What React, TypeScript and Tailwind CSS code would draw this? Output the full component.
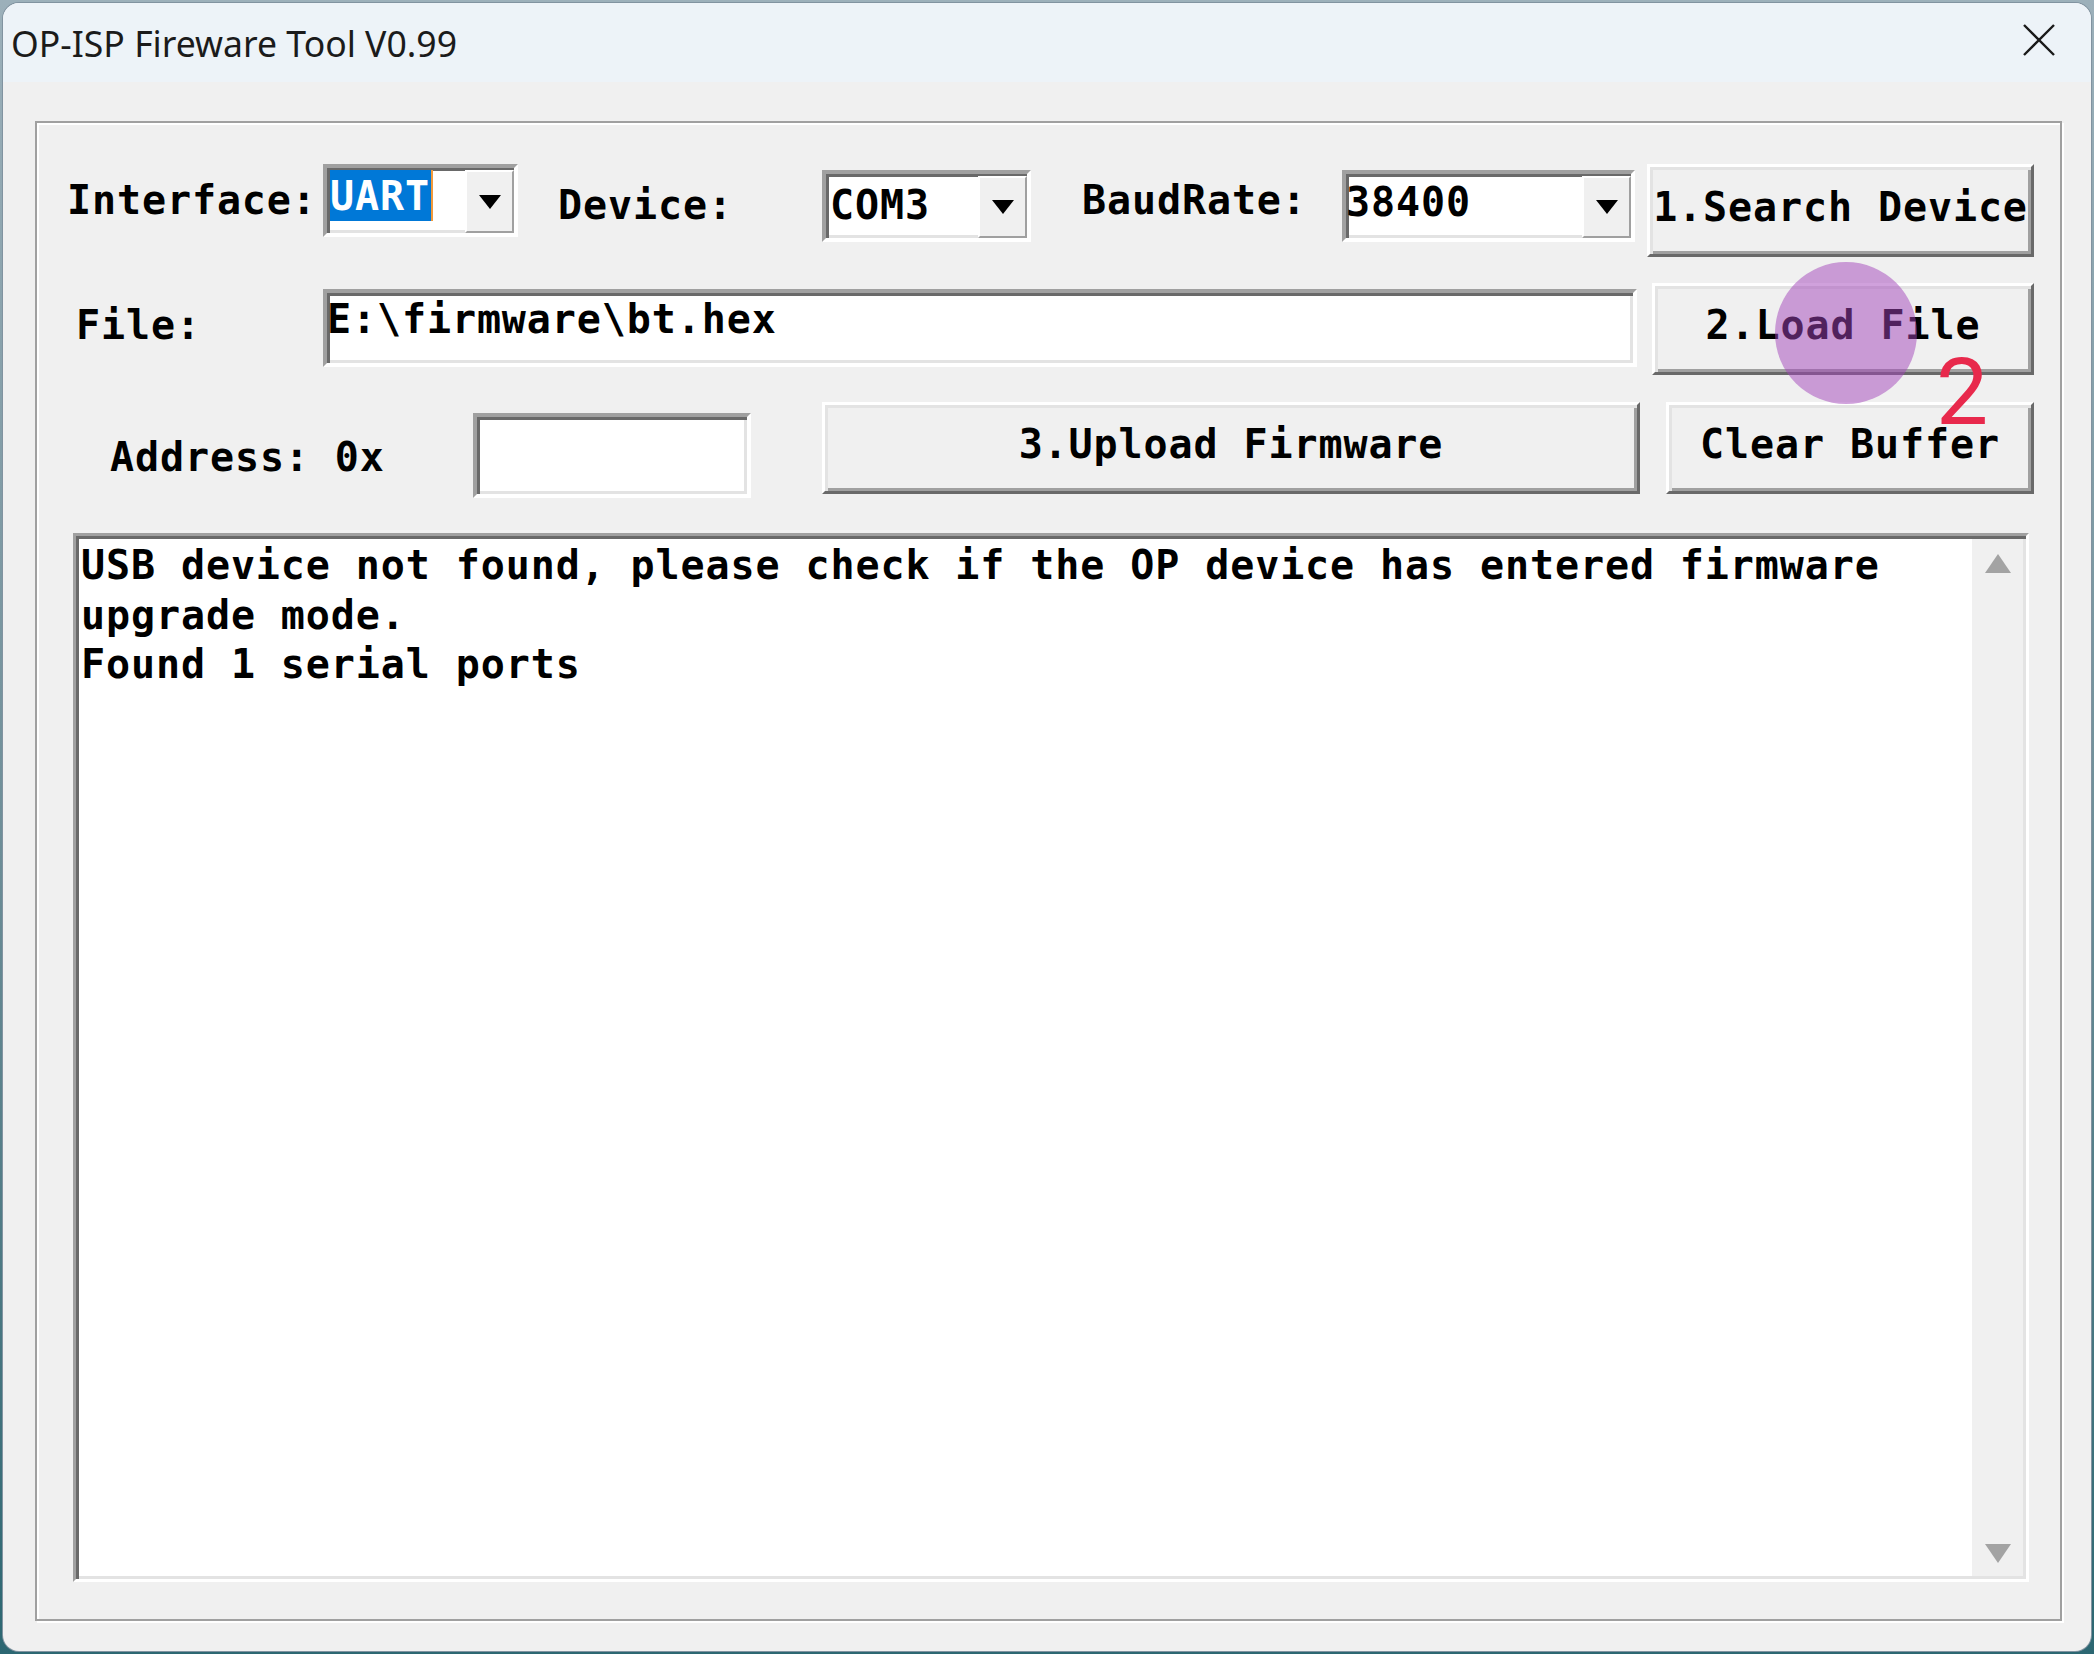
import React from "react";

const mono =
  "font-['DejaVu_Sans_Mono',monospace] font-bold text-[40px] leading-none tracking-[0.9px] text-black whitespace-nowrap";

// classic win32 3d borders
const sunken =
  "border-4 border-t-[#a0a0a0] border-l-[#a0a0a0] border-r-white border-b-white shadow-[inset_3px_3px_0_#696969,inset_-3px_-3px_0_#e3e3e3] bg-white";
const raised =
  "border-[3px] border-t-white border-l-white border-r-[#696969] border-b-[#696969] shadow-[inset_3px_3px_0_#e3e3e3,inset_-3px_-3px_0_#a0a0a0] bg-[#f0f0f0]";

const DropBtn = () => (
  <div className="mt-[2px] flex w-[49px] shrink-0 items-center justify-center border-2 border-t-white border-l-white border-r-[#a0a0a0] border-b-[#a0a0a0] bg-[#f0f0f0]">
    <svg width="22" height="14" viewBox="0 0 22 14">
      <polygon points="0,0 22,0 11,14" fill="#000" />
    </svg>
  </div>
);

const Combo = ({ className, children }: { className: string; children: React.ReactNode }) => (
  <div className={`flex ${sunken} ${className}`}>
    <div className="min-w-0 flex-1">{children}</div>
    <DropBtn />
  </div>
);

const Button = ({ className, label }: { className: string; label: string }) => (
  <div className={`flex shrink-0 items-center justify-center pb-[8px] ${raised} ${className}`}>
    <span className={mono}>{label}</span>
  </div>
);

export default function App() {
  return (
    <div className="relative h-[1654px] w-[2094px] overflow-hidden bg-linear-to-b from-[#9cb0ba] via-[#6f8f99] to-[#2c6772] pl-[3px] pt-[3px]">
      <div className="flex h-[1648px] w-[2088px] flex-col overflow-hidden rounded-[16px] bg-[#f0f0f0] shadow-[0_0_0_1px_#8193a0]">
        {/* title bar */}
        <div className="flex h-[79px] shrink-0 items-start justify-between bg-[#edf3f8] pl-[8px]">
          <span className="mt-[23px] font-['Noto_Sans',sans-serif] text-[35.6px] leading-none text-[#1b1b1b]">
            OP-ISP Fireware Tool V0.99
          </span>
          <svg className="mr-[36px] mt-[21px]" width="32" height="32" viewBox="0 0 32 32">
            <path d="M1 1 L31 31 M31 1 L1 31" stroke="#1a1a1a" strokeWidth="2.4" />
          </svg>
        </div>

        {/* body */}
        <div className="flex-1 pl-[32px] pt-[39px]">
          <div className="flex h-[1500px] w-[2027px] flex-col border-2 border-[#a0a0a0] shadow-[inset_2px_2px_0_#fff,2px_2px_0_#fff]">
            {/* row 1 */}
            <div className="mt-[41px] flex items-start">
              <span className={`ml-[30px] mt-[16px] w-[256px] ${mono}`}>Interface:</span>
              <Combo className="h-[73px] w-[195px]">
                <div className="ml-[3px] mt-[2px] h-[51px] w-[103px] border-r-2 border-[#f29a3c] bg-[#0078d7] pt-[6px]">
                  <span className={`${mono} text-white`}>UART</span>
                </div>
              </Combo>
              <span className={`ml-[40px] mt-[21px] w-[264px] ${mono}`}>Device:</span>
              <Combo className="mt-[6px] h-[72px] w-[209px]">
                <div className="pl-[4px] pt-[11px]">
                  <span className={mono}>COM3</span>
                </div>
              </Combo>
              <span className={`ml-[51px] mt-[16px] w-[260px] ${mono}`}>BaudRate:</span>
              <Combo className="mt-[6px] h-[72px] w-[293px]">
                <div className="pt-[8px]">
                  <span className={mono}>38400</span>
                </div>
              </Combo>
              <Button className="ml-[12px] h-[93px] w-[387px]" label="1.Search Device" />
            </div>

            {/* row 2 */}
            <div className="mt-[26px] flex items-start">
              <span className={`ml-[39px] mt-[22px] w-[247px] ${mono}`}>File:</span>
              <div className={`mt-[6px] h-[78px] w-[1314px] pt-[6px] ${sunken}`}>
                <span className={mono}>E:\firmware\bt.hex</span>
              </div>
              <Button className="ml-[15px] h-[92px] w-[382px]" label="2.Load File" />
            </div>

            {/* row 3 */}
            <div className="mt-[27px] flex items-start">
              <span className={`ml-[73px] mt-[35px] w-[363px] ${mono}`}>Address: 0x</span>
              <div className={`mt-[11px] h-[85px] w-[278px] ${sunken}`} />
              <Button className="ml-[71px] h-[92px] w-[818px]" label="3.Upload Firmware" />
              <Button className="ml-[26px] h-[92px] w-[368px]" label="Clear Buffer" />
            </div>

            {/* log */}
            <div className="ml-[36px] mt-[35px] flex h-[1049px] w-[1956px] border-[3px] border-t-[#a0a0a0] border-l-[#a0a0a0] border-r-white border-b-white bg-white shadow-[inset_3px_3px_0_#696969,inset_-3px_-3px_0_#e3e3e3]">
              <div className="flex-1 pl-[5px] pt-[5px] font-['DejaVu_Sans_Mono',monospace] text-[40px] font-bold leading-[49.5px] tracking-[0.9px] text-black">
                <div>USB device not found, please check if the OP device has entered firmware</div>
                <div>upgrade mode.</div>
                <div>Found 1 serial ports</div>
              </div>
              <div className="mb-[3px] mr-[3px] mt-[3px] flex w-[51px] flex-col items-center justify-between bg-[#f0f0f0] pb-[13px] pt-[15px]">
                <svg width="26" height="19" viewBox="0 0 26 19">
                  <polygon points="13,0 26,19 0,19" fill="#a3a3a3" />
                </svg>
                <svg width="26" height="19" viewBox="0 0 26 19">
                  <polygon points="0,0 26,0 13,19" fill="#a3a3a3" />
                </svg>
              </div>
            </div>
          </div>
        </div>
      </div>

      {/* annotation overlays */}
      <div className="absolute left-[1775px] top-[262px] h-[142px] w-[142px] rounded-full bg-[rgba(162,68,186,0.5)]" />
      <span className="absolute left-[1936px] top-[346px] font-['Roboto',sans-serif] text-[93px] font-normal leading-none text-[#e8294c]">
        2
      </span>
    </div>
  );
}
